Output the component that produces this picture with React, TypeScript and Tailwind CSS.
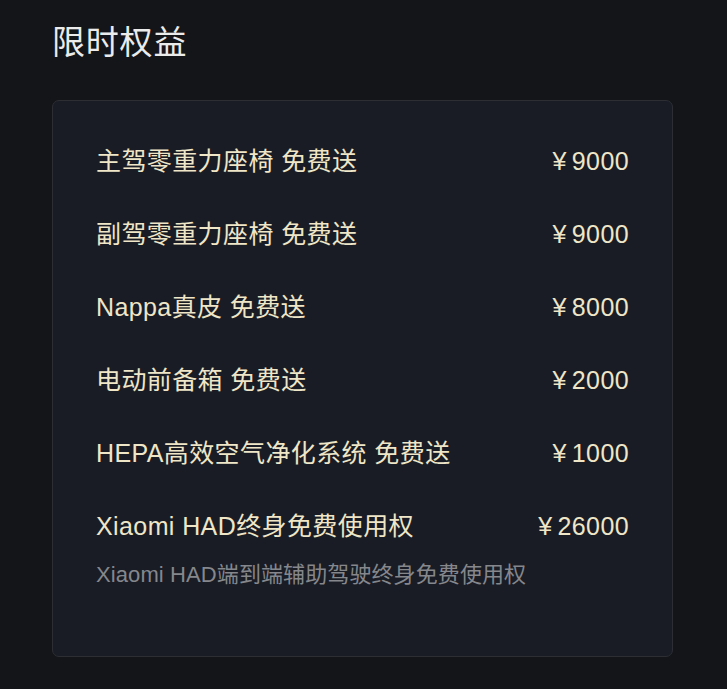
import React from "react";

const rows: [string, string][] = [
  ["主驾零重力座椅 免费送", "9000"],
  ["副驾零重力座椅 免费送", "9000"],
  ["Nappa真皮 免费送", "8000"],
  ["电动前备箱 免费送", "2000"],
  ["HEPA高效空气净化系统 免费送", "1000"],
];

function Price({ v }: { v: string }) {
  return (
    <span className="flex items-center">
      <span className="mr-[5px]">¥</span>
      <span>{v}</span>
    </span>
  );
}

export default function App() {
  return (
    <div
      className="w-[727px] h-[689px] bg-[#141519] overflow-hidden"
      style={{ fontFamily: '"Liberation Sans", "Noto Sans CJK SC", sans-serif' }}
    >
      <div className="pl-[52px] pr-[54px] pt-[19px]">
        <h1 className="text-[33px] leading-[48px] tracking-[0.8px] text-[#ebebeb] font-normal">限时权益</h1>
        <div className="mt-[33px] rounded-[7px] border border-[#2c2e33] bg-[#191c24] pl-[43px] pr-[43px] pt-[24px] pb-[67px]">
          {rows.map(([l, r], i) => (
            <div key={i} className="h-[73px] flex items-center justify-between text-[25px] tracking-[0.4px] text-[#efe6c8]">
              <span className="whitespace-pre">{l}</span>
              <Price v={r} />
            </div>
          ))}
          <div className="h-[73px] flex items-center justify-between text-[25px] tracking-[0.4px] text-[#efe6c8]">
            <span>Xiaomi HAD终身免费使用权</span>
            <Price v="26000" />
          </div>
          <div className="-mt-[2px] h-[28px] leading-[28px] text-[22px] tracking-[0.1px] text-[#85878c]">
            Xiaomi HAD端到端辅助驾驶终身免费使用权
          </div>
        </div>
      </div>
    </div>
  );
}
